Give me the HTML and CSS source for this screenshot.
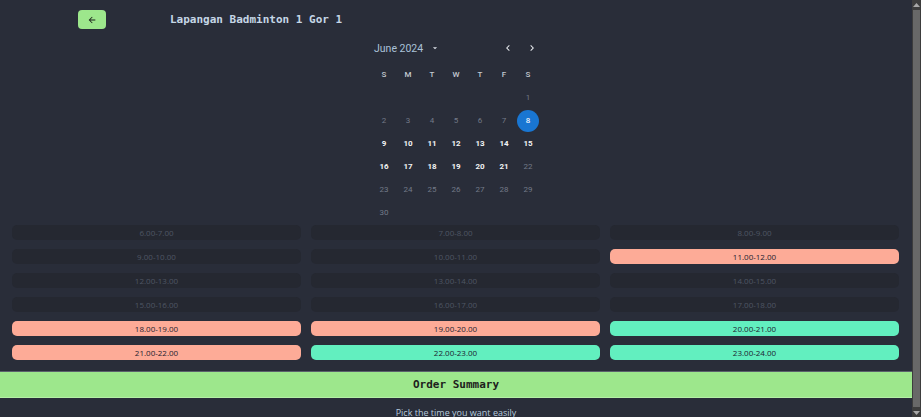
FILE: index.html
```html
<!DOCTYPE html>
<html lang="id">
<head>
<meta charset="utf-8">
<title>Lapangan Badminton 1 Gor 1</title>
<link rel="stylesheet" href="styles.css">
</head>
<body>
<div class="page">
  <header class="topbar">
    <button class="back-btn" aria-label="Kembali">
      <svg width="10" height="10" viewBox="0 0 24 24"><path d="M20 11H7.83l5.59-5.59L12 4l-8 8 8 8 1.41-1.41L7.83 13H20v-2z" fill="#1b1f1a"/></svg>
    </button>
    <h1 class="title">Lapangan Badminton 1 Gor 1</h1>
  </header>

  <section class="calendar">
    <div class="cal-head">
      <div class="cal-label">June 2024
        <svg class="caret" width="10" height="10" viewBox="0 0 24 24"><path d="M7 10l5 5 5-5z" fill="#d8dde4"/></svg>
      </div>
      <div class="cal-nav">
        <svg width="12" height="12" viewBox="0 0 24 24"><path d="M15.41 7.41 14 6l-6 6 6 6 1.41-1.41L10.83 12z" fill="#e6e9ee"/></svg>
        <svg width="12" height="12" viewBox="0 0 24 24"><path d="M10 6 8.59 7.41 13.17 12l-4.58 4.59L10 18l6-6z" fill="#e6e9ee"/></svg>
      </div>
    </div>
    <div class="week">
      <span>S</span><span>M</span><span>T</span><span>W</span><span>T</span><span>F</span><span>S</span>
    </div>
    <div class="days">
      <span></span><span></span><span></span><span></span><span></span><span></span><span class="off">1</span>
      <span class="off">2</span><span class="off">3</span><span class="off">4</span><span class="off">5</span><span class="off">6</span><span class="off">7</span><span class="sel"><i>8</i></span>
      <span>9</span><span>10</span><span>11</span><span>12</span><span>13</span><span>14</span><span>15</span>
      <span>16</span><span>17</span><span>18</span><span>19</span><span>20</span><span>21</span><span class="off">22</span>
      <span class="off">23</span><span class="off">24</span><span class="off">25</span><span class="off">26</span><span class="off">27</span><span class="off">28</span><span class="off">29</span>
      <span class="off">30</span>
    </div>
  </section>

  <section class="slots">
    <div class="slot na">6.00-7.00</div>
    <div class="slot na">7.00-8.00</div>
    <div class="slot na">8.00-9.00</div>
    <div class="slot na">9.00-10.00</div>
    <div class="slot na">10.00-11.00</div>
    <div class="slot booked">11.00-12.00</div>
    <div class="slot na">12.00-13.00</div>
    <div class="slot na">13.00-14.00</div>
    <div class="slot na">14.00-15.00</div>
    <div class="slot na">15.00-16.00</div>
    <div class="slot na">16.00-17.00</div>
    <div class="slot na">17.00-18.00</div>
    <div class="slot booked">18.00-19.00</div>
    <div class="slot booked">19.00-20.00</div>
    <div class="slot free">20.00-21.00</div>
    <div class="slot booked">21.00-22.00</div>
    <div class="slot free">22.00-23.00</div>
    <div class="slot free">23.00-24.00</div>
  </section>

  <button class="summary">Order Summary</button>
  <p class="hint">Pick the time you want easily</p>
</div>
<div class="scrollbar" aria-hidden="true">
  <div class="sb-arrow">
    <svg width="7" height="5" viewBox="0 0 7 5"><path d="M0 4h7L3.5 0z" fill="#a8a8a8"/></svg>
  </div>
  <div class="sb-thumb"></div>
  <div class="sb-arrow">
    <svg width="7" height="5" viewBox="0 0 7 5"><path d="M0 1h7L3.5 5z" fill="#a8a8a8"/></svg>
  </div>
</div>
</body>
</html>
```

FILE: styles.css
```css
html {
  background: #292d39;
}
body {
  margin: 0;
  height: 417px;
  overflow: hidden;
  display: flex;
  background: #292d39;
  font-family: Roboto, "Liberation Sans", sans-serif;
}
.page {
  flex: 1;
  min-width: 0;
}
.scrollbar {
  width: 9px;
  background: #3d3d3d;
  display: flex;
  flex-direction: column;
}
.sb-arrow {
  height: 10px;
  display: flex;
  align-items: center;
  justify-content: center;
}
.sb-thumb {
  flex: 1;
  margin: 0 1px;
  background: #686868;
}
.topbar {
  display: flex;
  align-items: center;
  padding-top: 10px;
  height: 19px;
}
.back-btn {
  margin-left: 78px;
  width: 28px;
  height: 19px;
  border: none;
  border-radius: 4px;
  background: #9de78c;
  display: flex;
  align-items: center;
  justify-content: center;
  padding: 0;
}
.title {
  margin: 0 0 0 64px;
  font-family: "DejaVu Sans Mono", "Liberation Mono", monospace;
  font-weight: bold;
  font-size: 11px;
  color: #c5d6e6;
}
.calendar {
  width: 168px;
  margin: 9px auto 0;
}
.cal-head {
  display: flex;
  align-items: center;
  justify-content: space-between;
  height: 20px;
}
.cal-label {
  display: flex;
  align-items: center;
  gap: 7px;
  margin-left: 2px;
  font-size: 10.5px;
  color: #a9c2d8;
}
.cal-nav {
  display: flex;
  gap: 12px;
  margin-right: 2px;
}
.week, .days {
  display: grid;
  grid-template-columns: repeat(7, 24px);
}
.week {
  height: 24px;
  margin-top: 4px;
  align-items: center;
}
.week span {
  text-align: center;
  font-size: 8px;
  font-weight: 500;
  color: #c3c9d1;
}
.days {
  grid-auto-rows: 23px;
}
.days span {
  display: flex;
  align-items: center;
  justify-content: center;
  font-size: 8px;
  font-weight: bold;
  color: #f2f3f5;
}
.days span.off {
  font-weight: normal;
  color: #737a88;
}
.days span.sel i {
  font-style: normal;
  width: 22px;
  height: 22px;
  border-radius: 50%;
  background: #1976d2;
  color: #e9f1fb;
  font-weight: 500;
  display: flex;
  align-items: center;
  justify-content: center;
}
.slots {
  display: grid;
  grid-template-columns: repeat(3, 1fr);
  column-gap: 10px;
  row-gap: 9px;
  padding: 1px 13px 0 12px;
}
.slot {
  height: 15px;
  border-radius: 5px;
  display: flex;
  align-items: center;
  justify-content: center;
  font-family: "Open Sans", "Noto Sans", sans-serif;
  font-size: 8px;
  color: #1c2230;
}
.slot.na {
  background: #252831;
  color: #4f5664;
}
.slot.booked {
  background: #fdab97;
}
.slot.free {
  background: #62efbf;
}
.summary {
  display: block;
  width: 100%;
  margin-top: 11px;
  height: 27px;
  border: none;
  border-top: 1px solid #5b616c;
  border-bottom: 1px solid #b4f0a6;
  background: #9de78c;
  font-family: "DejaVu Sans Mono", "Liberation Mono", monospace;
  font-weight: bold;
  font-size: 11px;
  color: #1d211c;
}
.hint {
  margin: 8px 0 0;
  text-align: center;
  font-family: "Open Sans", "Noto Sans", sans-serif;
  font-size: 9px;
  color: #b6cadd;
}
```
